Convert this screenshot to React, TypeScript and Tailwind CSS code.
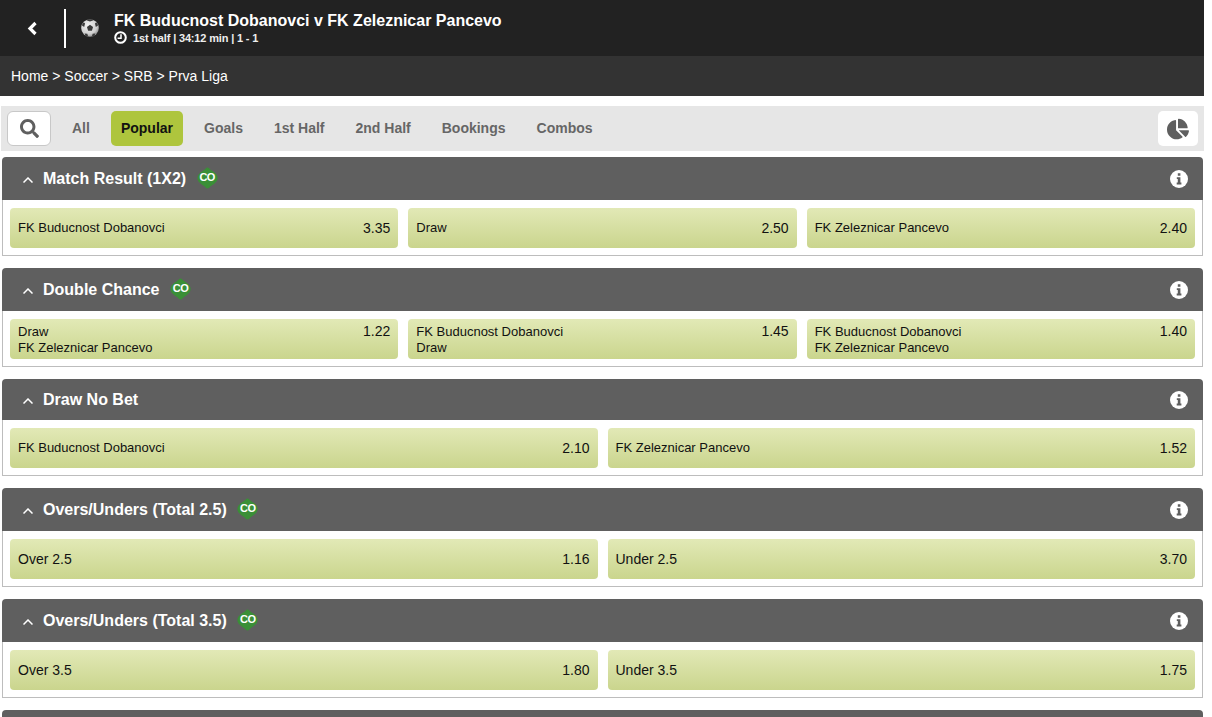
import { FaSearch, FaChartPie } from "react-icons/fa";

interface Selection {
  name: string;
  odds: string;
}

interface Market {
  title: string;
  co?: boolean;
  short?: boolean;
  selections: Selection[];
}

const tabs = ["All", "Popular", "Goals", "1st Half", "2nd Half", "Bookings", "Combos"];

const markets: Market[] = [
  {
    title: "Match Result (1X2)",
    co: true,
    selections: [
      { name: "FK Buducnost Dobanovci", odds: "3.35" },
      { name: "Draw", odds: "2.50" },
      { name: "FK Zeleznicar Pancevo", odds: "2.40" },
    ],
  },
  {
    title: "Double Chance",
    co: true,
    selections: [
      { name: "Draw\nFK Zeleznicar Pancevo", odds: "1.22" },
      { name: "FK Buducnost Dobanovci\nDraw", odds: "1.45" },
      { name: "FK Buducnost Dobanovci\nFK Zeleznicar Pancevo", odds: "1.40" },
    ],
  },
  {
    title: "Draw No Bet",
    short: true,
    selections: [
      { name: "FK Buducnost Dobanovci", odds: "2.10" },
      { name: "FK Zeleznicar Pancevo", odds: "1.52" },
    ],
  },
  {
    title: "Overs/Unders (Total 2.5)",
    co: true,
    selections: [
      { name: "Over 2.5", odds: "1.16" },
      { name: "Under 2.5", odds: "3.70" },
    ],
  },
  {
    title: "Overs/Unders (Total 3.5)",
    co: true,
    selections: [
      { name: "Over 3.5", odds: "1.80" },
      { name: "Under 3.5", odds: "1.75" },
    ],
  },
];

function SoccerBall() {
  return (
    <svg width="18" height="18" viewBox="0 0 20 20" className="block">
      <defs>
        <radialGradient id="ball" cx="40%" cy="35%" r="70%">
          <stop offset="0%" stopColor="#f2f2f2" />
          <stop offset="70%" stopColor="#cfcfcf" />
          <stop offset="100%" stopColor="#8a8a8a" />
        </radialGradient>
      </defs>
      <circle cx="10" cy="10" r="9.8" fill="url(#ball)" />
      <path d="M10 6.5l3.4 2.500-1.300 4H7.900l-1.300-4z" fill="#3a3a3a" />
      <path d="M6 1.500l4 1.300 4-1.300-1-1.100h-6zM.8 7l2.700 2 1-4-1.500-1.500zM19.200 7l-2.700 2-1-4 1.500-1.500zM4 16l3 .5 1 3-3-1zM16 16l-3 .5-1 3 3-1z" fill="#3a3a3a" />
    </svg>
  );
}

function ClockIcon() {
  return (
    <svg width="13" height="13" viewBox="0 0 13 13" fill="none" stroke="white" className="block">
      <circle cx="6.500" cy="6.500" r="5.300" strokeWidth="2" />
      <path d="M7 3.300v3.900H3.600" strokeWidth="1.500" />
    </svg>
  );
}

function InfoIcon() {
  return (
    <svg width="18" height="18" viewBox="0 0 18 18" className="block">
      <circle cx="9" cy="9" r="9" fill="white" />
      <path d="M7.800 3.300h2.600v2.400H7.800zM6.800 7.200h3.600v5.400h1v1.900H6.700v-1.900h1.100V9.100h-1z" fill="#5f5f5f" />
    </svg>
  );
}

function CoBadge() {
  return (
    <span className="relative ml-[10.5px] -mt-[2px] flex h-[22px] w-[21px] items-center justify-center text-[11px] font-bold leading-none tracking-[-0.5px] text-white">
      <svg width="21" height="22" viewBox="0 0 21 22" className="absolute inset-0">
        <path d="M10.500.5c1.500 0 2 1.500 3.500 2.500 2 1.500 4 2.500 5.500 4.500 1.500 2 1.500 5 0 7-1.500 2-3.500 3-5.500 4.500-1.500 1-2 2.500-3.500 2.500s-2-1.500-3.500-2.500c-2-1.500-4-2.500-5.500-4.500-1.500-2-1.500-5 0-7C3 5.500 5 4.500 7 3c1.500-1 2-2.500 3.500-2.500z" fill="#3a8f37" />
      </svg>
      <span className="relative">CO</span>
    </span>
  );
}

function SelectionButton({ selection }: { selection: Selection }) {
  const twoLine = selection.name.includes("\n");
  // Over/Under labels are a size up from the team names in the reference
  const big = /^(Over|Under)/.test(selection.name);
  return (
    <div
      className={`flex h-10 flex-1 items-start justify-between rounded-[4px] bg-gradient-to-b from-[#e2e9b6] to-[#cad58d] px-2 leading-4 text-[#111] ${
        big ? "text-sm" : "text-[13px]"
      } ${twoLine ? "pt-[4px]" : "pt-[12px]"}`}
    >
      <span className={`whitespace-pre-line ${twoLine ? "mt-[1px]" : ""}`}>{selection.name}</span>
      <span className="text-sm leading-4">{selection.odds}</span>
    </div>
  );
}

function MarketCard({ market }: { market: Market }) {
  return (
    <section className="mb-[12px]">
      <div
        className={`flex items-center justify-between rounded-t-[4px] bg-[#5f5f5f] pl-[21px] pr-[15px] text-white ${
          market.short ? "h-[41px]" : "h-[43px]"
        }`}
      >
        <div className="flex items-center">
          <svg width="10" height="6" viewBox="0 0 10 6" fill="none" stroke="white" strokeWidth="1.500" className="mr-[10px] mt-[2px]">
            <path d="M.5 5.500L5 1l4.500 4.500" />
          </svg>
          <h2 className="text-base font-bold leading-none">{market.title}</h2>
          {market.co && <CoBadge />}
        </div>
        <InfoIcon />
      </div>
      <div className="flex gap-[10px] border border-t-0 border-[#bdbdbd] bg-white px-[7px] pb-[7px] pt-2">
        {market.selections.map((s) => (
          <SelectionButton key={s.name} selection={s} />
        ))}
      </div>
    </section>
  );
}

export default function App() {
  return (
    <div className="h-[717px] w-[1212px] overflow-hidden bg-white font-['Liberation_Sans',Arial,sans-serif]">
      <div className="w-[1204px]">
        <header className="flex h-[56px] items-center bg-[#222] text-white">
          <div className="flex w-[64px] justify-center pt-[1px]">
            <svg width="11" height="15" viewBox="0 0 11 15" fill="none" stroke="white" strokeWidth="3.200">
              <path d="M8.500 2L3 7.500 8.500 13" />
            </svg>
          </div>
          <div className="h-[39px] w-[2px] bg-white" />
          <div className="ml-[15px] mr-[15px]">
            <SoccerBall />
          </div>
          <div className="-mt-[1px]">
            <div className="text-base font-bold leading-[20px]">FK Buducnost Dobanovci v FK Zeleznicar Pancevo</div>
            <div className="flex items-center text-[11px] font-bold leading-[14px] tracking-[-0.16px] text-[#eee]">
              <ClockIcon />
              <span className="ml-[6px]">1st half | 34:12 min | 1 - 1</span>
            </div>
          </div>
        </header>
        <nav className="flex h-[40px] items-center bg-[#333] pl-[11px] text-sm text-white">
          Home &gt; Soccer &gt; SRB &gt; Prva Liga
        </nav>
        <div className="ml-[1px] mt-[10px] flex h-[45px] items-center bg-[#e6e6e6] px-[6px]">
          <div className="mr-[11px] flex h-[35px] w-[44px] items-center justify-center rounded-[6px] border border-[#c8c8c8] bg-white text-[#5f5f5f]">
            <FaSearch className="h-[19px] w-[19px]" />
          </div>
          {tabs.map((t) => (
            <div
              key={t}
              className={`mr-[11px] flex h-[35px] items-center rounded-[5px] px-[10px] pb-[1px] text-sm font-bold ${
                t === "Popular" ? "bg-[#aec53d] text-[#111]" : "text-[#666]"
              }`}
            >
              {t}
            </div>
          ))}
          <div className="ml-auto flex h-[35px] w-[40px] items-center justify-center rounded-[5px] bg-white text-[#5f5f5f]">
            <FaChartPie className="h-[22px] w-[22px]" />
          </div>
        </div>
        <main className="ml-[2px] mr-[1px] mt-[6px]">
          {markets.map((m) => (
            <MarketCard key={m.title} market={m} />
          ))}
          <div className="h-[10px] rounded-t-[4px] bg-[#5f5f5f]" />
        </main>
      </div>
    </div>
  );
}
